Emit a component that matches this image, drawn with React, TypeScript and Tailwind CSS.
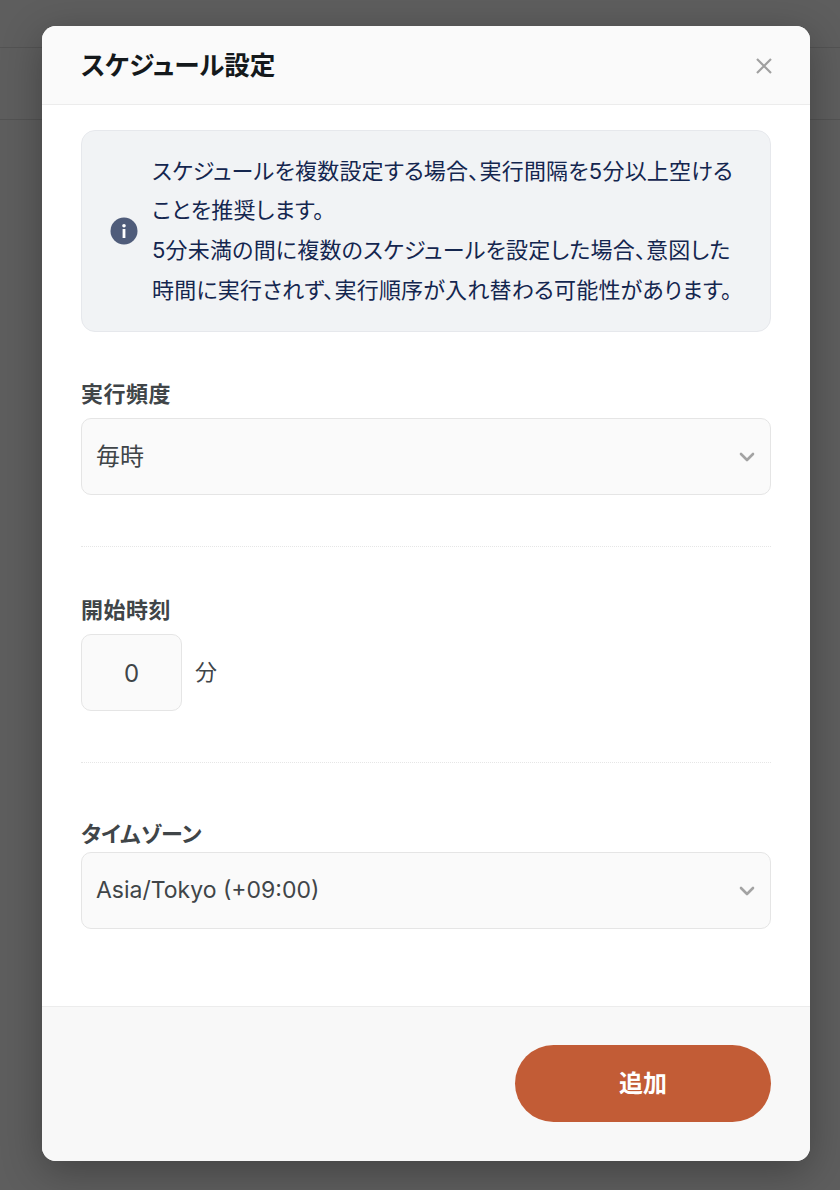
import React from "react";

function Chevron() {
  return (
    <svg width="16" height="10" viewBox="0 0 16 10" fill="none" className="shrink-0">
      <path d="M2 2l6 6 6-6" stroke="#a3a3a3" strokeWidth="2.6" strokeLinecap="round" strokeLinejoin="round" />
    </svg>
  );
}

function SelectBox({ children }: { children: React.ReactNode }) {
  return (
    <div className="flex h-[77px] items-center justify-between rounded-[10px] border border-[#e5e5e5] bg-[#fafafa] pl-[14px] pr-[15px] text-[#404548] [font-feature-settings:normal]">
      {children}
      <Chevron />
    </div>
  );
}

export default function App() {
  return (
    <div className="relative h-[1190px] w-[840px] overflow-hidden bg-[#5e5e5e] font-['Inter','Noto_Sans_CJK_JP',sans-serif] [font-feature-settings:'palt']">
      <div className="h-[48px] border-b border-[#535353]" />
      <div className="h-[72px] border-b border-[#535353]" />
      <div className="absolute left-[42px] top-[26px] flex h-[1135px] w-[768px] flex-col overflow-hidden rounded-[14px] bg-white shadow-[0_10px_40px_rgba(0,0,0,0.3)]">
        <header className="flex h-[79px] shrink-0 items-center justify-between border-b border-[#ececec] bg-[#fafafa] pl-[39px] pr-[37px]">
          <h1 className="pt-[2px] text-[25.6px] font-bold text-[#14191c]">スケジュール設定</h1>
          <svg width="18" height="18" viewBox="0 0 18 18" fill="none" className="mt-[2px]">
            <path d="M2 2l14 14M16 2L2 16" stroke="#a0a0a0" strokeWidth="2.2" />
          </svg>
        </header>
        <main className="flex flex-1 flex-col px-[39px] pt-[25px]">
          <div className="flex h-[202px] items-center gap-[14px] rounded-[14px] border border-[#e6e8ec] bg-[#f1f3f5] pl-[28px] pr-[30px] text-[22px] leading-[39.6px] tracking-[0.21px] text-[#14264f]">
            <svg width="28" height="28" viewBox="0 0 28 28" className="shrink-0">
              <circle cx="14" cy="14" r="13.5" fill="#4f5c7a" />
              <rect x="12.6" y="12" width="2.8" height="9" fill="#fff" />
              <circle cx="14" cy="8.8" r="1.8" fill="#fff" />
            </svg>
            <p>
              スケジュールを複数設定する場合、実行間隔を5分以上空けることを推奨します。
              <br />
              5分未満の間に複数のスケジュールを設定した場合、意図した時間に実行されず、実行順序が入れ替わる可能性があります。
            </p>
          </div>

          <label className="mt-[46px] block text-[22px] font-bold leading-[33px] tracking-[0.5px] text-[#404548]">実行頻度</label>
          <div className="mt-[7px]">
            <SelectBox><span className="text-[24px]">毎時</span></SelectBox>
          </div>
          <div className="mt-[51px] border-t border-dotted border-[#e6e6e6]" />

          <label className="mt-[47px] block text-[22px] font-bold leading-[33px] tracking-[0.5px] text-[#404548]">開始時刻</label>
          <div className="mt-[7px] flex items-center gap-[13px]">
            <div className="flex h-[77px] w-[101px] items-center justify-center rounded-[10px] border border-[#e5e5e5] bg-[#fafafa] pt-[2px] text-[24px] text-[#404548]">0</div>
            <span className="text-[22px] text-[#404548]">分</span>
          </div>
          <div className="mt-[51px] border-t border-dotted border-[#e6e6e6]" />

          <label className="mt-[55px] block text-[22px] font-bold leading-[33px] text-[#404548]">タイムゾーン</label>
          <div className="mt-[1px]">
            <SelectBox><span className="text-[23px]">Asia/Tokyo (+09:00)</span></SelectBox>
          </div>
        </main>
        <footer className="flex h-[155px] shrink-0 items-start justify-end border-t border-[#ececec] bg-[#f8f8f8] pr-[39px] pt-[38px]">
          <button className="h-[77px] w-[256px] rounded-full bg-[#c25c36] text-[24px] font-bold text-white">追加</button>
        </footer>
      </div>
    </div>
  );
}
